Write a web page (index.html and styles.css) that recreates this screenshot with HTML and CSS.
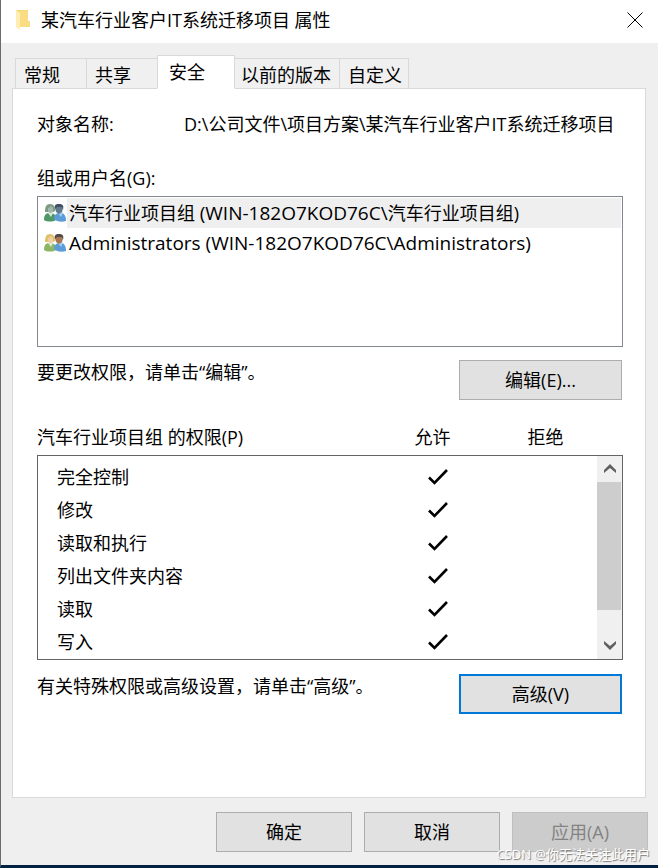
FILE: index.html
```html
<!DOCTYPE html>
<html lang="zh-CN">
<head>
  <meta charset="UTF-8">
  <title>某汽车行业客户IT系统迁移项目 属性</title>
  <link rel="stylesheet" href="styles.css">
</head>
<body>

  <!-- Shared icons -->
  <svg class="icon-defs" aria-hidden="true">
    <symbol id="check" viewBox="0 0 22 18">
      <path d="M2 9.500 L7.500 15 L20 2" fill="none" stroke="#000" stroke-width="2.600"/>
    </symbol>
    <symbol id="arrow-up" viewBox="0 0 12 10">
      <path d="M0 9V6L6 0l6 6v3L6 4z" fill="#606060"/>
    </symbol>
    <symbol id="arrow-down" viewBox="0 0 12 10">
      <path d="M0 0v3l6 6 6-6V0L6 5z" fill="#606060"/>
    </symbol>
    <symbol id="people" viewBox="0 0 22 20">
      <path d="M0 17c0-4 1-6 4-7h4c3 1 4 3 4 7-3 2-9 2-12 0z" fill="var(--shirt)"/>
      <path d="M4 10l3 4 2-4-2-2z" fill="#dcebd8"/>
      <path d="M1 9C1 4 2 1 6 1s5 3 5 7l-2 1H4z" fill="var(--hair)"/>
      <path d="M4 5c1 0 2-1 3-2l2 2v3c0 2-4 3-5 0z" fill="var(--face)"/>
      <path d="M10 16c0-3 1-5 4-6h4c3 1 4 4 4 8-3 1-6 1-9 0z" fill="#5b9bd8"/>
      <path d="M14 10l3 4 2-4-2-2z" fill="#a5cbee"/>
      <path d="M11 5c0-3 2-4 4-4s4 1 4 4l-1 4-3 2-3-2z" fill="var(--face2)"/>
      <path d="M11 6c-1-4 1-5 4-5 4 0 5 2 4 6l-1-3h-5z" fill="var(--hair2)"/>
    </symbol>
  </svg>

  <div class="window">
    <header class="title-bar">
      <svg class="folder" viewBox="0 0 16 22" aria-hidden="true">
        <path d="M1 1h12v11h2v6H2z" fill="#f6d778"/>
        <path d="M5 2h8v10h2v6H5z" fill="#fadd82"/>
        <path d="M1 1l4 3v17l-4-3z" fill="#ffedb1"/>
      </svg>
      <h1>某汽车行业客户IT系统迁移项目 属性</h1>
      <button class="close-btn" aria-label="关闭">
        <svg viewBox="0 0 16 16"><path d="M0.500 0.500l15 15M15.500 0.500l-15 15" stroke="#000" fill="none"/></svg>
      </button>
    </header>

    <nav class="tabs" role="tablist">
      <button class="tab" role="tab">常规</button>
      <button class="tab" role="tab">共享</button>
      <button class="tab active" role="tab" aria-selected="true">安全</button>
      <button class="tab" role="tab">以前的版本</button>
      <button class="tab" role="tab">自定义</button>
    </nav>

    <main class="panel" role="tabpanel">
      <div class="object-row">
        <span class="object-label">对象名称:</span>
        <span>D:\公司文件\项目方案\某汽车行业客户IT系统迁移项目</span>
      </div>

      <!-- Groups and users -->
      <p class="label" id="group-label">组或用户名(G):</p>
      <ul class="group-list" role="listbox" aria-labelledby="group-label">
        <li class="group selected" role="option" aria-selected="true">
          <svg class="people muted"><use href="#people"/></svg>
          <span class="group-name">汽车行业项目组 <span class="account">(WIN-182O7KOD76C\</span>汽车行业项目组)</span>
        </li>
        <li class="group" role="option">
          <svg class="people"><use href="#people"/></svg>
          <span class="group-name"><span class="account">Administrators (WIN-182O7KOD76C\Administrators)</span></span>
        </li>
      </ul>

      <div class="action-row">
        <p>要更改权限，请单击“编辑”。</p>
        <button class="btn wide">编辑(E)...</button>
      </div>

      <!-- Permissions -->
      <div class="perm-head">
        <span id="perm-label">汽车行业项目组 的权限(P)</span>
        <span class="perm-col">允许</span>
        <span class="perm-col">拒绝</span>
      </div>
      <div class="perm-box">
        <table class="perm-table" aria-labelledby="perm-label">
          <tbody>
            <tr><th scope="row">完全控制</th><td><svg class="check"><use href="#check"/></svg></td><td></td></tr>
            <tr><th scope="row">修改</th><td><svg class="check"><use href="#check"/></svg></td><td></td></tr>
            <tr><th scope="row">读取和执行</th><td><svg class="check"><use href="#check"/></svg></td><td></td></tr>
            <tr><th scope="row">列出文件夹内容</th><td><svg class="check"><use href="#check"/></svg></td><td></td></tr>
            <tr><th scope="row">读取</th><td><svg class="check"><use href="#check"/></svg></td><td></td></tr>
            <tr><th scope="row">写入</th><td><svg class="check"><use href="#check"/></svg></td><td></td></tr>
          </tbody>
        </table>
        <div class="scrollbar">
          <button class="scroll-btn" aria-label="向上滚动"><svg><use href="#arrow-up"/></svg></button>
          <div class="scroll-thumb"></div>
          <button class="scroll-btn" aria-label="向下滚动"><svg><use href="#arrow-down"/></svg></button>
        </div>
      </div>

      <div class="action-row">
        <p>有关特殊权限或高级设置，请单击“高级”。</p>
        <button class="btn wide focused">高级(V)</button>
      </div>
    </main>

    <footer class="buttons">
      <button class="btn">确定</button>
      <button class="btn">取消</button>
      <button class="btn" disabled>应用(A)</button>
    </footer>
    <span class="watermark">CSDN @你无法关注此用户</span>
  </div>

</body>
</html>
```

FILE: styles.css
```css
* {
  box-sizing: border-box;
}

body {
  margin: 0;
  font-family: "Open Sans", "Noto Sans CJK SC", sans-serif;
  font-size: 18px;
  line-height: 24px;
  color: #000;
  background: #efefef;
}

button {
  font: inherit;
  color: inherit;
  padding: 0;
  border: none;
  border-radius: 0;
}

p, h1, ul {
  margin: 0;
  padding: 0;
}

svg {
  display: block;
}

.icon-defs {
  position: absolute;
  width: 0;
  height: 0;
}

.window {
  position: relative;
  display: flex;
  flex-direction: column;
  min-height: 100vh;
  border-left: 1px solid #6b6b6b;
  border-bottom: 3px solid #00213f;
}

/* Title bar */
.title-bar {
  display: flex;
  align-items: center;
  height: 43px;
  padding: 0 15px 3px 14px;
  background: #fff;
}

.title-bar h1 {
  flex: 1;
  font-size: 18px;
  font-weight: normal;
}

.folder {
  width: 16px;
  height: 22px;
  margin-right: 10px;
}

.close-btn {
  background: none;
}

.close-btn svg {
  width: 16px;
  height: 16px;
}

/* Tabs */
.tabs {
  z-index: 1;
  display: flex;
  align-items: flex-end;
  height: 46px;
  padding-left: 14px;
}

.tab {
  height: 31px;
  padding: 3px 26px 0 8px;
  border: 1px solid #d9d9d9;
  border-right: none;
  background: #f0f0f0;
}

.tab:nth-child(n+4) {
  padding-right: 8px;
  padding-left: 6px;
  border-left: none;
}

.tab:last-child {
  padding-right: 6px;
  padding-left: 8px;
  border: 1px solid #d9d9d9;
}

.tab.active {
  height: 34px;
  padding: 0 29px 0 11px;
  border-right: 1px solid #d9d9d9;
  border-bottom-color: #fff;
  background: #fff;
}

/* Panel */
.panel {
  flex: 1;
  margin: -1px 12px 14px 11px;
  padding: 23px 22px 0 24px;
  border: 1px solid #d9d9d9;
  background: #fff;
}

.object-row {
  display: flex;
}

.object-label {
  width: 147px;
}

.label {
  margin-top: 30px;
}

.group-list {
  height: 151px;
  margin-top: 6px;
  padding: 1px;
  border: 1px solid #828790;
  list-style: none;
}

.group {
  display: flex;
  align-items: center;
  height: 30px;
  padding-left: 5px;
}

.group-name {
  flex: 1;
  margin-left: 1px;
  padding-left: 2px;
  line-height: 30px;
}

.account {
  font-size: 19px;
}

.selected .group-name {
  background: #efefef;
}

.people {
  --shirt: #8db563;
  --hair: #dfc16a;
  --face: #f0cda3;
  --face2: #a8764f;
  --hair2: #514b48;
  width: 22px;
  height: 20px;
}

.people.muted {
  --shirt: #4f9866;
  --hair: #7d9b80;
  --face: #a3b8ac;
  --face2: #617b8c;
  --hair2: #3d5064;
}

.action-row {
  display: flex;
  justify-content: space-between;
  margin: 13px 1px 0 0;
}

.perm-box + .action-row {
  margin-top: 14px;
}

.btn {
  width: 136px;
  height: 40px;
  border: 1px solid #adadad;
  background: #e1e1e1;
}

.btn.wide {
  width: 163px;
}

.btn.focused {
  border: 2px solid #0078d7;
}

.btn:disabled {
  border-color: #bfbfbf;
  background: #ccc;
  color: #838383;
}

/* Permissions */
.perm-head {
  display: grid;
  grid-template-columns: 1fr 113px 113px;
  margin-top: 25px;
  padding-right: 21px;
}

.perm-col {
  text-align: center;
}

.perm-box {
  display: flex;
  margin-top: 6px;
  border: 1px solid #646464;
}

.perm-table {
  flex: 1;
  margin: 4px 0 1px;
  border-collapse: collapse;
  table-layout: fixed;
}

.perm-table th {
  height: 33px;
  padding: 0 0 0 19px;
  font-weight: normal;
  text-align: left;
}

.perm-table td {
  width: 106px;
  padding: 0;
}

.check {
  width: 22px;
  height: 18px;
  margin: 0 auto;
}

.scrollbar {
  display: flex;
  flex-direction: column;
  justify-content: space-between;
  width: 25px;
  background: #f0f0f0;
}

.scroll-btn {
  display: flex;
  align-items: center;
  justify-content: center;
  height: 26px;
  background: none;
}

.scroll-btn svg {
  width: 12px;
  height: 10px;
}

.scroll-thumb {
  flex: 1;
  margin: 0 1px 23px 0;
  background: #cdcdcd;
}

/* Bottom buttons */
.buttons {
  display: flex;
  justify-content: flex-end;
  gap: 12px;
  padding: 0 10px 13px 0;
}

.watermark {
  position: absolute;
  right: 8px;
  bottom: 1px;
  font-size: 13px;
  line-height: 20px;
  color: #fff;
  text-shadow: 1px 1px 1px #777;
}
```
